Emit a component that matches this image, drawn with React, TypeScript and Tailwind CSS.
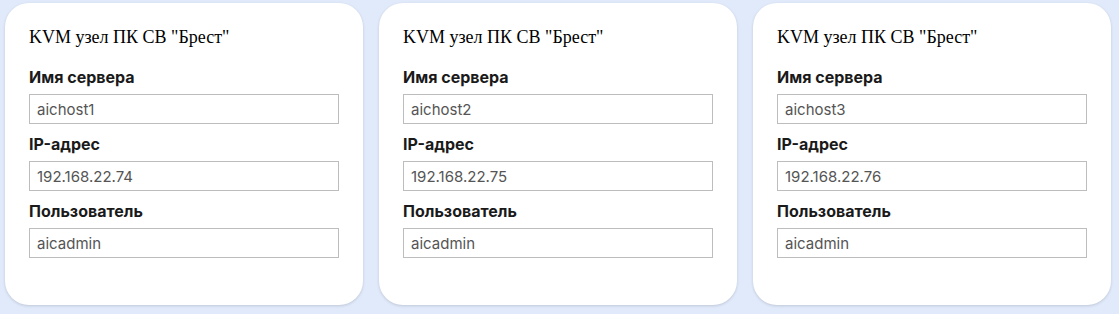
import React from 'react';

type Host = { name: string; ip: string; user: string };

const hosts: Host[] = [
  { name: 'aichost1', ip: '192.168.22.74', user: 'aicadmin' },
  { name: 'aichost2', ip: '192.168.22.75', user: 'aicadmin' },
  { name: 'aichost3', ip: '192.168.22.76', user: 'aicadmin' },
];

function Field({ label, value }: { label: string; value: string }) {
  return (
    <div className="flex flex-col">
      <label className="text-[16px] leading-[20px] font-bold text-[#1a1a1a] mb-[7px] font-['Inter',sans-serif]">
        {label}
      </label>
      <input
        readOnly
        value={value}
        className="h-[30px] w-full border border-[#bdbdbd] bg-white px-[7px] text-[15px] text-[#555] font-['Inter',sans-serif] outline-none"
      />
    </div>
  );
}

function HostCard({ host }: { host: Host }) {
  return (
    <div className="w-[358px] h-[302px] rounded-[24px] bg-white shadow-[0_1px_3px_rgba(0,0,0,0.15)] pl-[24px] pr-[24px] pt-[23px]">
      <h3 className="text-[18px] leading-[22px] text-black font-['Liberation_Serif',serif] mb-[19px]">
        KVM узел ПК СВ "Брест"
      </h3>
      <div className="flex flex-col gap-[10px]">
        <Field label="Имя сервера" value={host.name} />
        <Field label="IP-адрес" value={host.ip} />
        <Field label="Пользователь" value={host.user} />
      </div>
    </div>
  );
}

export default function App() {
  return (
    <div className="w-[1119px] h-[314px] bg-[#e0eafb] pl-[5px] pt-[3px] flex gap-[16px]">
      {hosts.map((h) => (
        <HostCard key={h.name} host={h} />
      ))}
    </div>
  );
}
